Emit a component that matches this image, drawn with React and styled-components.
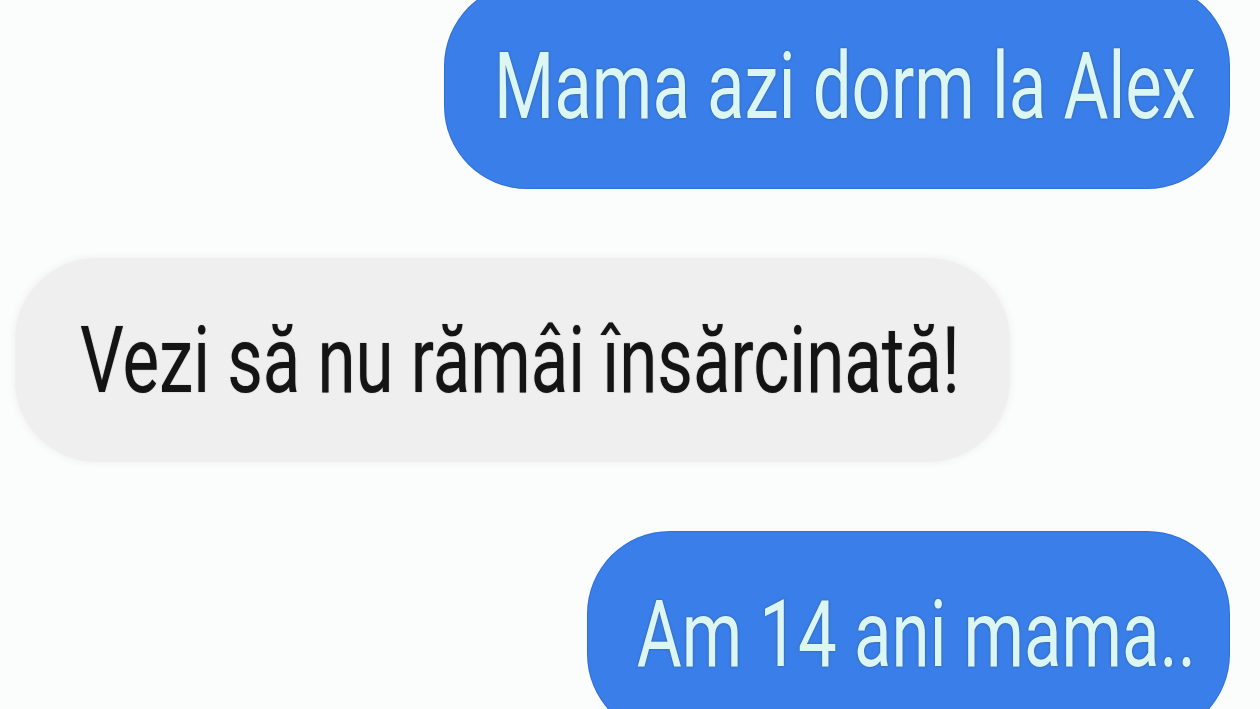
import React from 'react';
import styled, { createGlobalStyle } from 'styled-components';

const GlobalStyle = createGlobalStyle`
  html, body {
    margin: 0;
    padding: 0;
    background: #fbfdfd;
    overflow: hidden;
  }
  body {
    font-family: Roboto, "Liberation Sans", Arial, sans-serif;
  }
`;

const Screen = styled.div`
  width: 1260px;
  height: 709px;
  overflow: hidden;
  background: #fbfdfd;
`;

const Thread = styled.div`
  display: flex;
  flex-direction: column;
  gap: 70px;
  margin-top: -16px;
  padding: 0 31px 0 15px;
`;

const Row = styled.div`
  display: flex;
  justify-content: ${(p) => (p.$mine ? 'flex-end' : 'flex-start')};
`;

const Bubble = styled.div`
  display: flex;
  align-items: center;
  height: 204px;
  box-sizing: border-box;
  border-radius: 82px;
  padding: ${(p) => (p.$mine ? '0 33px 0 49px' : '0 50px 0 65px')};
  background: ${(p) => (p.$mine ? '#3a7ee9' : '#efefef')};
  box-shadow: ${(p) => (p.$mine ? '0 0 0 1px #2f6fd6' : '0 0 6px 2px #f2f2f2')};
`;

const Text = styled.span`
  display: inline-block;
  font-family: Roboto, "Liberation Sans", Arial, sans-serif;
  font-size: 69px;
  line-height: 1;
  white-space: nowrap;
  transform: scaleY(1.35);
  color: ${(p) => (p.$mine ? '#dcf6f3' : '#141414')};
  text-shadow: ${(p) => (p.$mine ? '0 0 2px rgba(40, 80, 90, 0.7)' : '0 0 1px rgba(0, 0, 0, 0.4)')};
`;

const messages = [
  { id: 1, mine: true, text: 'Mama azi dorm la Alex' },
  { id: 2, mine: false, text: 'Vezi să nu rămâi însărcinată!' },
  { id: 3, mine: true, text: 'Am 14 ani mama..' },
];

const App = () => (
  <Screen>
    <GlobalStyle />
    <Thread>
      {messages.map((m) => (
        <Row key={m.id} $mine={m.mine}>
          <Bubble $mine={m.mine}>
            <Text $mine={m.mine}>{m.text}</Text>
          </Bubble>
        </Row>
      ))}
    </Thread>
  </Screen>
);

export default App;
